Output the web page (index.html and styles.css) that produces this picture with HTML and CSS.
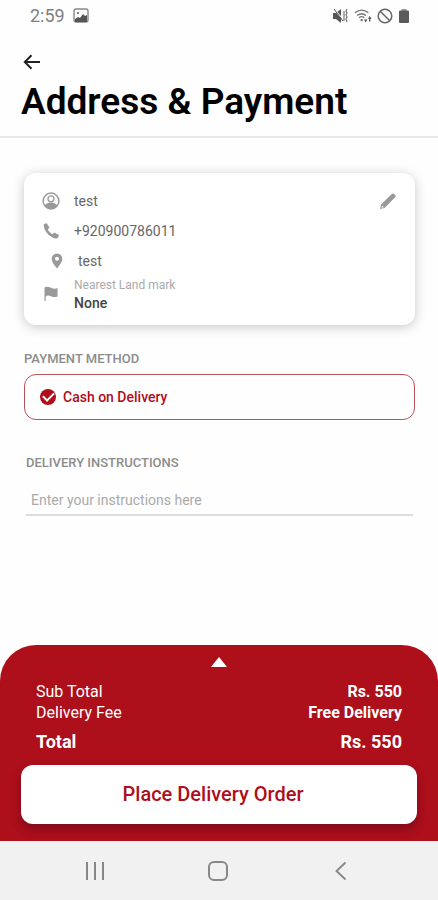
FILE: index.html
```html
<!DOCTYPE html>
<html lang="en">
<head>
    <meta charset="UTF-8">
    <meta name="viewport" content="width=device-width, initial-scale=1.0">
    <title>Address &amp; Payment</title>
    <link rel="stylesheet" href="styles.css">
</head>
<body>
    <!-- Status bar -->
    <div class="status-bar">
        <span class="time">2:59</span>
        <svg class="status-icon" viewBox="0 0 16 16">
            <rect x="1" y="1" width="14" height="13" rx="2" fill="none" stroke="#888" stroke-width="1.4"/>
            <circle cx="5" cy="5" r="1.2" fill="#888"/>
            <path d="M2 14v-3l3-2 2 1 3-4 2 2 2-1v7z" fill="#555"/>
        </svg>
        <div class="status-right">
            <svg class="status-icon" viewBox="0 0 16 16">
                <path d="M0 5h3l5-4v14l-5-4H0z" fill="#555"/>
                <path d="M1 1l11 13" stroke="#fff" stroke-width="1.4"/>
                <path d="M1 1l9 12" stroke="#555"/>
                <path d="M11 3v10M14 1l-1 2 1 2-1 2 1 2-1 2 1 3" fill="none" stroke="#777" stroke-width="1.200"/>
            </svg>
            <svg class="status-icon wifi" viewBox="0 0 20 16">
                <g fill="none" stroke="#777" stroke-width="1.4">
                    <path d="M1 4.500q7.500-6 15 0"/>
                    <path d="M3.500 7.500q5-4 10 0"/>
                    <path d="M5.500 10q3-2.400 6 0"/>
                </g>
                <circle cx="8.500" cy="12.500" r="1.300" fill="#666"/>
                <path d="M11 12h4l-2 3zM15.500 11l2-3 2 3h-1.300v3h-1.400v-3z" fill="#555"/>
            </svg>
            <svg class="status-icon" viewBox="0 0 16 16">
                <circle cx="8" cy="8" r="6.800" fill="none" stroke="#666" stroke-width="1.500"/>
                <path d="M3.200 3.200l9.600 9.600" stroke="#666" stroke-width="1.500"/>
            </svg>
            <svg class="status-icon battery" viewBox="0 0 12 16">
                <path d="M3.500 1h5v2h-5z" fill="#999"/>
                <rect x="1" y="2.500" width="10" height="12.500" rx="1" fill="#5a5a5a"/>
            </svg>
        </div>
    </div>

    <!-- Header -->
    <header class="header">
        <button class="back" type="button" aria-label="Back">
            <svg viewBox="0 0 18 16">
                <path d="M17 8H2M8.500 1.200L1.800 8l6.700 6.800" fill="none" stroke="#222" stroke-width="2"/>
            </svg>
        </button>
        <h1>Address &amp; Payment</h1>
    </header>

    <main class="content">
        <!-- Address -->
        <section class="card">
            <ul class="details">
                <li>
                    <svg class="icon" viewBox="0 0 18 18">
                        <circle cx="9" cy="9" r="7.900" fill="none" stroke="#999" stroke-width="1.500"/>
                        <circle cx="9" cy="6.800" r="3" fill="none" stroke="#999" stroke-width="1.300"/>
                        <path d="M2.500 13.500Q5 10.500 9 10.500t6.500 3Q13 17 9 17t-6.500-3.500z" fill="#999"/>
                    </svg>
                    <span>test</span>
                </li>
                <li>
                    <svg class="icon" viewBox="0 0 18 18">
                        <path d="M1.500 2.500L4.500 1l3 4.500L5.700 7.500q1.300 3 4.600 4.700l2-1.700 4.700 2.500-1.200 3Q14 17 10.500 15.500 2.500 11.500 1.500 2.500z" fill="#999"/>
                    </svg>
                    <span>+920900786011</span>
                </li>
                <li class="place">
                    <svg class="icon" viewBox="0 0 18 18">
                        <path fill-rule="evenodd" d="M9 1.500a5.300 5.300 0 0 0-5.300 5.300C3.700 10.500 9 16.500 9 16.500s5.300-6 5.300-9.700A5.300 5.300 0 0 0 9 1.500zm0 3.300a2 2 0 1 1 0 4 2 2 0 0 1 0-4z" fill="#999"/>
                    </svg>
                    <span>test</span>
                </li>
                <li>
                    <svg class="icon" viewBox="0 0 18 18">
                        <path d="M2.500 2.500Q5.500 1 9 2.700t6.500.3v8.500q-3 1.300-6.500-.3t-5.300.3V16H2.500z" fill="#999"/>
                    </svg>
                    <span class="landmark"><small>Nearest Land mark</small><b>None</b></span>
                </li>
            </ul>
            <button class="edit" type="button" aria-label="Edit address">
                <svg viewBox="0 0 18 18">
                    <path d="M1 17l1-4.500L12.800 1.900q1.100-1 2.200 0l1.200 1.200q1 1.100 0 2.200L5.500 16z" fill="#999"/>
                    <path d="M3 13.500l1.800 1.800-2.300.4z" fill="#fff"/>
                </svg>
            </button>
        </section>

        <!-- Payment -->
        <h2>PAYMENT METHOD</h2>
        <label class="method">
            <input type="radio" name="payment" value="cash" checked>
            Cash on Delivery
        </label>

        <!-- Instructions -->
        <div class="instructions">
            <label for="instructions">DELIVERY INSTRUCTIONS</label>
            <input type="text" id="instructions" placeholder="Enter your instructions here">
        </div>
    </main>

    <!-- Order summary -->
    <section class="summary">
        <button class="expand" type="button" aria-label="Show order details"></button>
        <dl>
            <div class="line"><dt>Sub Total</dt><dd>Rs. 550</dd></div>
            <div class="line"><dt>Delivery Fee</dt><dd>Free Delivery</dd></div>
            <div class="line total"><dt>Total</dt><dd>Rs. 550</dd></div>
        </dl>
        <button class="order" type="button">Place Delivery Order</button>
    </section>

    <!-- System navigation -->
    <nav class="system-nav">
        <button type="button" aria-label="Recent apps">
            <svg viewBox="0 0 22 22"><path d="M3 2v18M11 2v18M19 2v18" stroke="#888" stroke-width="2"/></svg>
        </button>
        <button type="button" aria-label="Home">
            <svg viewBox="0 0 22 22"><rect x="2" y="2" width="18" height="18" rx="5" fill="none" stroke="#888" stroke-width="2"/></svg>
        </button>
        <button type="button" aria-label="Back">
            <svg viewBox="0 0 22 22"><path d="M15.500 2.500L6.500 11l9 8.500" fill="none" stroke="#888" stroke-width="1.900"/></svg>
        </button>
    </nav>
</body>
</html>
```
FILE: styles.css
```css
/* Global Styling */
* {
    box-sizing: border-box;
}

body {
    margin: 0;
    min-height: 100vh;
    display: flex;
    flex-direction: column;
    font-family: Roboto, Arial, sans-serif;
    font-size: 14px;
    color: #666;
    background: #fefefe;
}

button {
    display: block;
    padding: 0;
    border: 0;
    background: none;
    font-family: inherit;
    cursor: pointer;
}

svg {
    display: block;
}

/* Status Bar */
.status-bar {
    display: flex;
    align-items: center;
    gap: 8px;
    height: 31px;
    padding: 0 28px 0 30px;
}

.time {
    font-size: 18px;
    color: #808080;
}

.status-icon {
    width: 16px;
    height: 16px;
}

.status-right {
    display: flex;
    gap: 5px;
    margin-left: auto;
}

.wifi {
    width: 18px;
}

.battery {
    width: 12px;
}

/* Header */
.header {
    padding: 23px 21px 13px;
    border-bottom: 2px solid #e8e8e8;
}

.back {
    margin-left: 2px;
}

.back svg {
    width: 18px;
    height: 16px;
}

h1 {
    margin: 11px 0 0;
    font-size: 37px;
    line-height: 42px;
    font-weight: 600;
    color: #000;
}

/* Content */
.content {
    flex: 1;
    padding: 35px 23px 24px 24px;
}

.card {
    display: flex;
    align-items: flex-start;
    justify-content: space-between;
    padding: 13px 18px;
    border-radius: 12px;
    background: #fff;
    box-shadow: 0 2px 12px rgba(0, 0, 0, 0.22);
}

.details {
    margin: 0;
    padding: 0;
    list-style: none;
}

.details li {
    display: flex;
    align-items: center;
    gap: 14px;
    min-height: 30px;
}

.details .place {
    padding-left: 6px;
    gap: 12px;
}

.icon {
    width: 18px;
    height: 18px;
}

.landmark {
    display: flex;
    flex-direction: column;
    line-height: 18px;
}

.landmark small {
    font-size: 12px;
    color: #aaa;
}

.landmark b {
    font-weight: 500;
    color: #444;
}

.edit {
    margin-top: 6px;
}

.edit svg {
    width: 18px;
    height: 18px;
}

h2,
.instructions label {
    display: block;
    margin: 0;
    font-size: 13px;
    line-height: 18px;
    font-weight: 500;
    color: #8c8c8c;
}

h2 {
    margin: 25px 0 6px;
}

/* Payment Method */
.method {
    display: flex;
    align-items: center;
    gap: 7px;
    height: 46px;
    padding: 0 15px;
    border: 1px solid #b5525a;
    border-radius: 12px;
    font-weight: 500;
    color: #b00d1a;
}

.method input {
    appearance: none;
    display: grid;
    place-items: center;
    width: 16px;
    height: 16px;
    margin: 0;
    border-radius: 50%;
    background: #b00d1a;
}

.method input:checked::after {
    content: "";
    width: 9px;
    height: 5px;
    margin-bottom: 3px;
    border: solid #fff;
    border-width: 0 0 2px 2px;
    transform: rotate(-45deg);
}

/* Delivery Instructions */
.instructions {
    margin: 34px 2px 0;
}

.instructions input {
    display: block;
    width: 100%;
    height: 30px;
    margin-top: 14px;
    padding: 0 5px;
    border: 0;
    border-bottom: 2px solid #ddd;
    background: none;
    font: inherit;
}

.instructions input::placeholder {
    color: #aaa;
}

/* Order Summary */
.summary {
    padding: 12px 21px 17px;
    border-radius: 36px 36px 0 0;
    background: #ad0f1b;
    color: #fff;
}

.expand {
    margin: 0 auto;
    border: solid transparent;
    border-width: 0 8px 10px;
    border-bottom-color: #fff;
}

.summary dl {
    margin: 14px 15px 11px;
}

.line {
    display: flex;
    justify-content: space-between;
    font-size: 16px;
    line-height: 21px;
}

.line dd {
    margin: 0;
    font-weight: 700;
}

.total {
    margin-top: 7px;
    font-size: 18px;
    line-height: 24px;
    font-weight: 700;
}

.order {
    width: 100%;
    height: 59px;
    padding: 0 12px 2px 0;
    border-radius: 12px;
    background: #fff;
    box-shadow: 0 5px 10px rgba(60, 0, 20, 0.4);
    font-size: 20px;
    font-weight: 500;
    color: #ad0f1b;
}

/* System Navigation */
.system-nav {
    display: flex;
    justify-content: space-around;
    align-items: center;
    height: 59px;
    padding: 0 36px 0 34px;
    background: #f1f1f1;
}

.system-nav svg {
    width: 22px;
    height: 22px;
}
```
